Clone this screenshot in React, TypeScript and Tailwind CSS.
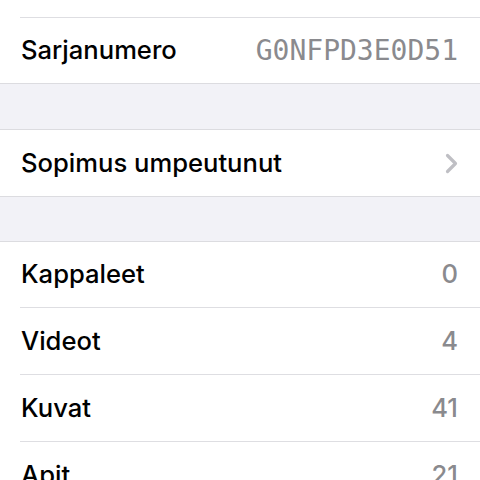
import React from "react";

const Chevron = () => (
  <svg width="13" height="21" viewBox="0 0 13 21" fill="none">
    <path
      d="M2.5 2.5L10.5 10.5L2.5 18.5"
      stroke="#bfbfc4"
      strokeWidth="3.2"
      strokeLinecap="round"
      strokeLinejoin="round"
    />
  </svg>
);

const Row = ({
  label,
  value,
  mono,
  chevron,
  divider = true,
  height = "h-[66px]",
}: {
  label: string;
  value?: string;
  mono?: boolean;
  chevron?: boolean;
  divider?: boolean;
  height?: string;
}) => (
  <div className="pl-[20px]">
    <div
      className={`${height} flex items-center justify-between pr-[22px] ${
        divider ? "border-b border-[#dedee2]" : ""
      }`}
    >
      <span className="pl-px text-[25.6px] font-medium text-black">{label}</span>
      {value && (
        <span
          className={
            mono
              ? "font-['DejaVu_Sans_Mono',monospace] text-[28px] text-[#8a8a8e]"
              : "text-[25.6px] font-medium text-[#8a8a8e]"
          }
        >
          {value}
        </span>
      )}
      {chevron && <Chevron />}
    </div>
  </div>
);

export default function App() {
  return (
    <div className="w-[480px] h-[480px] overflow-hidden bg-[#f2f2f7] font-['Inter',sans-serif]">
      <div className="bg-white border-b border-[#dcdce0]">
        <div className="pl-[20px]">
          <div className="h-[18px] border-b border-[#dedee2]" />
        </div>
        <Row label="Sarjanumero" value="G0NFPD3E0D51" mono divider={false} height="h-[65px]" />
      </div>
      <div className="h-[45px]" />
      <div className="bg-white border-y border-[#dcdce0]">
        <Row label="Sopimus umpeutunut" chevron divider={false} />
      </div>
      <div className="h-[44px]" />
      <div className="bg-white border-t border-[#dcdce0]">
        <Row label="Kappaleet" value="0" height="h-[66px]" />
        <Row label="Videot" value="4" height="h-[67px]" />
        <Row label="Kuvat" value="41" height="h-[67px]" />
        <Row label="Apit" value="21" divider={false} />
      </div>
    </div>
  );
}
